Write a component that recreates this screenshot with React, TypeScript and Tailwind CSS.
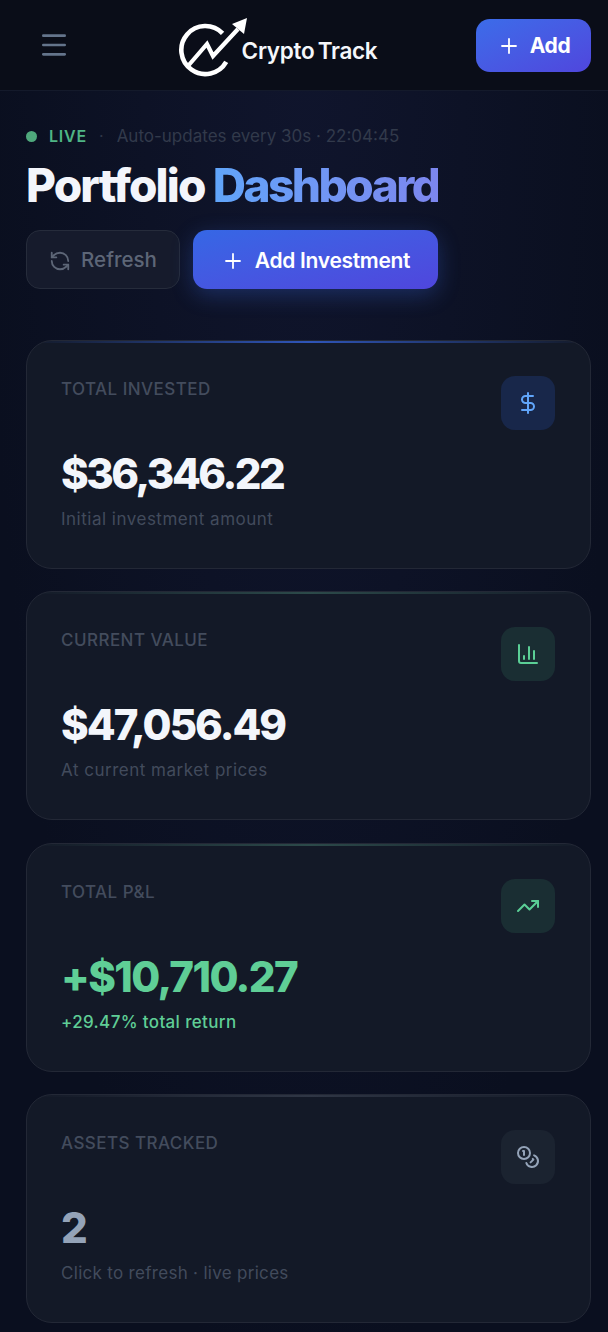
import React from 'react';
import { Menu, Plus, RefreshCcw, DollarSign, ChartColumn, TrendingUp, Coins } from 'lucide-react';

const Logo = () => (
  <svg width="70" height="62" viewBox="0 0 70 62" fill="none" className="shrink-0">
    <path d="M44.6 17.4A24 24 0 1 0 48.2 45.9" stroke="white" strokeWidth="4.6" />
    <path d="M10 50L29 28L35 40L60 13" stroke="white" strokeWidth="4.2" />
    <path d="M69 2L54 8L66 18Z" fill="white" />
  </svg>
);

const stats = [
  {
    label: 'TOTAL INVESTED',
    value: '$36,346.22',
    note: 'Initial investment amount',
    icon: DollarSign,
    iconBox: 'bg-[#18274a] text-[#60a5fa]',
    valueColor: 'text-[#f3f6fb] tracking-[-2.5px]',
    noteColor: 'text-[#424b5c] tracking-[0.5px]',
    line: 'via-[#2f55b8]',
  },
  {
    label: 'CURRENT VALUE',
    value: '$47,056.49',
    note: 'At current market prices',
    icon: ChartColumn,
    iconBox: 'bg-[#1a2e33] text-[#5bcf96]',
    valueColor: 'text-[#f3f6fb] tracking-[-2px]',
    noteColor: 'text-[#424b5c] tracking-[0.5px]',
    line: 'via-[#2c4a4a]',
  },
  {
    label: 'TOTAL P&L',
    value: '+$10,710.27',
    note: '+29.47% total return',
    icon: TrendingUp,
    iconBox: 'bg-[#1a2e33] text-[#5bcf96]',
    valueColor: 'text-[#5fce96] tracking-[-1.6px]',
    noteColor: 'text-[#5fce96] font-medium tracking-[0.35px]',
    line: 'via-[#2c4a4a]',
  },
  {
    label: 'ASSETS TRACKED',
    value: '2',
    note: 'Click to refresh · live prices',
    icon: Coins,
    iconBox: 'bg-[#1b2330] text-[#94a3b8]',
    valueColor: 'text-[#94a3b8]',
    noteColor: 'text-[#424b5c] tracking-[0.3px]',
    line: 'via-[#2f3645]',
  },
];

export default function App() {
  return (
    <div className="h-[1332px] overflow-hidden bg-[#0a0f1f] bg-[radial-gradient(ellipse_at_top,#10152d,#0a0f1f_75%)] font-['Inter',sans-serif]">
      <header className="flex h-[91px] items-center justify-between border-b border-[#141a2b] bg-[#0a0d18] pl-[38px] pr-[17px]">
        <Menu size={32} strokeWidth={2} className="text-[#64748b]" />
        <div className="ml-[9px] mt-[3px] flex items-start">
          <Logo />
          <span className="mt-[21px] -ml-[6px] text-[22.5px] leading-7 font-semibold tracking-[-0.3px] [word-spacing:-2px] text-[#f5f7fb]">Crypto Track</span>
        </div>
        <button className="flex h-[53px] w-[115px] items-center justify-center gap-[9px] rounded-[14px] bg-gradient-to-br from-[#3b6ce9] to-[#4f46dd] pt-[1px] text-[21px] font-bold tracking-[-0.4px] text-white">
          <Plus size={24} strokeWidth={1.8} />
          Add
        </button>
      </header>

      <main className="pl-[26px] pr-[17px] pt-[35px]">
        <div className="flex items-center leading-5">
          <span className="h-[11px] w-[11px] rounded-full bg-[#4fa87c]" />
          <span className="ml-[12px] text-[16px] font-semibold tracking-[0.8px] text-[#4fb585]">LIVE</span>
          <span className="ml-[12px] text-[#2f3748]">·</span>
          <span className="ml-[13px] text-[17px] text-[#323a4b]">Auto-updates every 30s · 22:04:45</span>
        </div>

        <h1 className="mt-[10px] text-[46px] leading-[58px] font-extrabold tracking-[-1.85px] text-[#f3f5fb]">
          Portfolio{' '}
          <span className="bg-gradient-to-r from-[#60a5fa] to-[#7c86ee] bg-clip-text tracking-[-2.55px] text-transparent">Dashboard</span>
        </h1>

        <div className="mt-[16px] flex gap-[13px]">
          <button className="flex h-[59px] w-[154px] items-center justify-center gap-[10px] rounded-[14px] border border-[#262c3b] bg-[#161b2c] pt-[2px] text-[20.5px] font-medium text-[#5d6677]">
            <RefreshCcw size={22} strokeWidth={2} />
            Refresh
          </button>
          <button className="flex h-[59px] w-[245px] items-center justify-center gap-[10px] rounded-[14px] bg-gradient-to-br from-[#3567e5] to-[#4f46dd] pt-[2px] text-[21px] font-semibold tracking-[-0.3px] text-white shadow-[0_6px_22px_rgba(59,108,233,0.3)]">
            <Plus size={24} strokeWidth={1.8} />
            Add Investment
          </button>
        </div>

        <div className="mt-[50.5px] flex flex-col gap-[22.6px]">
          {stats.map((s) => (
            <div key={s.label} className="relative flex h-[229px] overflow-hidden rounded-[26px] border border-[#232836] bg-[#131927] pl-[34px] pr-[35px] pt-[35px]">
              <div className={`absolute inset-x-0 top-0 h-[2px] bg-gradient-to-r from-transparent ${s.line} to-transparent`} />
              <div className="min-w-0 flex-1">
                <p className="mt-[1px] text-[17px] leading-6 font-medium tracking-[0.45px] text-[#434c5d]">{s.label}</p>
                <p className={`mt-[47px] text-[42px] leading-[52px] font-extrabold ${s.valueColor}`}>{s.value}</p>
                <p className={`mt-[7px] text-[17px] leading-6 ${s.noteColor}`}>{s.note}</p>
              </div>
              <div className={`flex h-[54px] w-[54px] items-center justify-center rounded-[14px] ${s.iconBox}`}>
                <s.icon size={24} strokeWidth={2} />
              </div>
            </div>
          ))}
        </div>
      </main>
    </div>
  );
}
